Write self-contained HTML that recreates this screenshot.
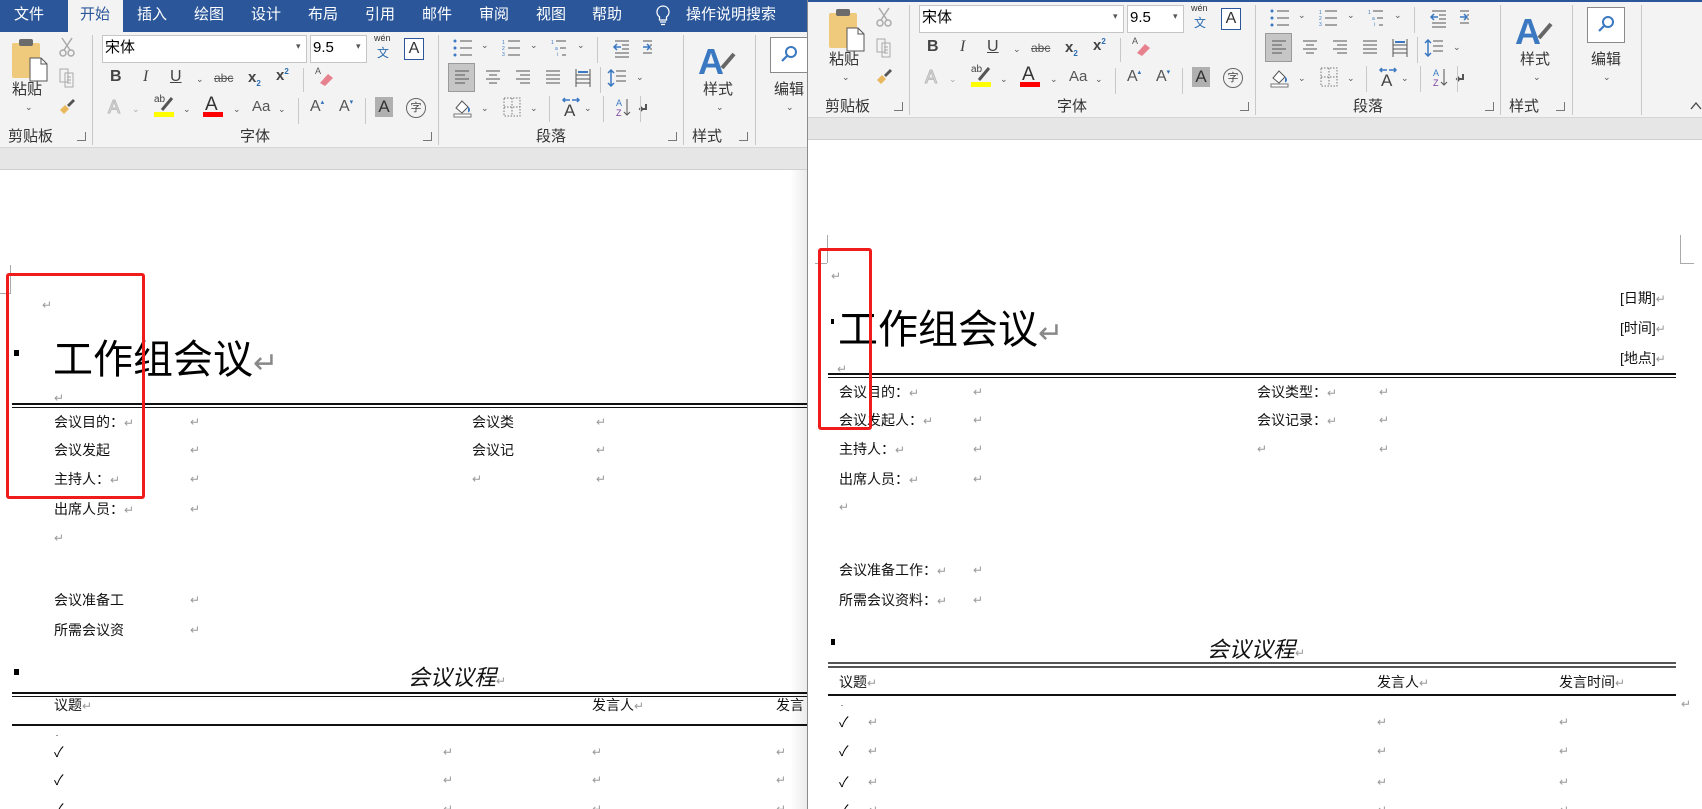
<!DOCTYPE html>
<html><head><meta charset="utf-8">
<style>
*{margin:0;padding:0;box-sizing:border-box}
body{width:1702px;height:809px;overflow:hidden;background:#fff;position:relative;font-family:"Liberation Sans","Noto Sans CJK SC",sans-serif;color:#222}
.a{position:absolute;white-space:nowrap}
.win{position:absolute;overflow:hidden}
.rb{position:absolute;width:900px;height:116px;background:#f3f3f3;border-bottom:1px solid #d6d6d6}
.t{font-size:15px;line-height:20px;color:#333}
.sep{position:absolute;width:1px;background:#c8c8c8}
.dd{font-size:9px;color:#555}
.lb{font-size:15px;color:#333;line-height:20px}
.dl{position:absolute;width:9px;height:9px;border:1px solid #777;border-top:none;border-left:none}
.band{position:absolute;height:22px;background:#e6e6e6;border-bottom:1px solid #d0d0d0}
.d{font-size:14px;line-height:20px;color:#111;font-family:"Liberation Sans","Noto Sans CJK SC",sans-serif}
.r{font-size:12px;color:#999;line-height:20px}
.ttl{font-size:40px;line-height:48px;color:#000;font-family:"Liberation Sans","Noto Sans CJK SC",sans-serif}
.ln{position:absolute;height:2px;background:#111}
.ck{font-size:14px;line-height:20px;color:#000}
</style></head><body>

<!-- LEFT WINDOW -->
<div class="win" style="left:0;top:0;width:807px;height:809px">
  <div class="a" style="left:0;top:0;width:807px;height:32px;background:#2b579a"></div>
  <div class="a" style="left:68px;top:0;width:55px;height:32px;background:#f3f3f3"></div>
  <div class="a t" style="left:14px;top:5px;color:#fff">文件</div>
  <div class="a t" style="left:80px;top:5px;color:#2b579a">开始</div>
  <div class="a t" style="left:137px;top:5px;color:#fff">插入</div>
  <div class="a t" style="left:194px;top:5px;color:#fff">绘图</div>
  <div class="a t" style="left:251px;top:5px;color:#fff">设计</div>
  <div class="a t" style="left:308px;top:5px;color:#fff">布局</div>
  <div class="a t" style="left:365px;top:5px;color:#fff">引用</div>
  <div class="a t" style="left:422px;top:5px;color:#fff">邮件</div>
  <div class="a t" style="left:479px;top:5px;color:#fff">审阅</div>
  <div class="a t" style="left:536px;top:5px;color:#fff">视图</div>
  <div class="a t" style="left:592px;top:5px;color:#fff">帮助</div>
  <svg class="a" style="left:655px;top:5px" width="16" height="22" viewBox="0 0 16 22"><path d="M8 1a6 6 0 0 0-3.5 10.9V15h7v-3.1A6 6 0 0 0 8 1z M5 17h6 M6 19.5h4" fill="none" stroke="#fff" stroke-width="1.3"/></svg>
  <div class="a t" style="left:686px;top:5px;color:#fff">操作说明搜索</div>
  <div class="rb" id="rbL" style="left:0;top:32px"></div>
  <div class="band" style="left:0;top:148px;width:807px"></div>
  <div class="a" style="left:0;top:170px;width:807px;height:639px;background:#fff"></div>
  <div class="a" style="left:790px;top:170px;width:17px;height:639px;background:linear-gradient(to right,rgba(0,0,0,0),rgba(0,0,0,0.08))"></div>

  <div class="a" style="left:10px;top:265px;width:1px;height:28px;background:#aaa"></div>
  <div class="a" style="left:0;top:293px;width:11px;height:1px;background:#aaa"></div>
  <div class="a r" style="left:42px;top:295px">↵</div>
  <div class="a" style="left:14px;top:350px;width:5px;height:6px;background:#000"></div>
  <div class="a ttl" style="left:53px;top:336px">工作组会议<span style="color:#888;font-size:30px">↵</span></div>
  <div class="a r" style="left:54px;top:388px">↵</div>
  <div class="ln" style="left:12px;top:403px;width:795px;height:1.5px"></div>
  <div class="ln" style="left:12px;top:407px;width:795px;height:1px"></div>

  <div class="a d" style="left:54px;top:412px">会议目的：<span class="r">↵</span></div><div class="a r" style="left:190px;top:412px">↵</div>
  <div class="a d" style="left:472px;top:412px">会议类</div><div class="a r" style="left:596px;top:412px">↵</div>
  <div class="a d" style="left:54px;top:440px">会议发起</div><div class="a r" style="left:190px;top:440px">↵</div>
  <div class="a d" style="left:472px;top:440px">会议记</div><div class="a r" style="left:596px;top:440px">↵</div>
  <div class="a d" style="left:54px;top:469px">主持人：<span class="r">↵</span></div><div class="a r" style="left:190px;top:469px">↵</div>
  <div class="a r" style="left:472px;top:469px">↵</div><div class="a r" style="left:596px;top:469px">↵</div>
  <div class="a d" style="left:54px;top:499px">出席人员：<span class="r">↵</span></div><div class="a r" style="left:190px;top:499px">↵</div>
  <div class="a r" style="left:54px;top:528px">↵</div>
  <div class="a d" style="left:54px;top:590px">会议准备工</div><div class="a r" style="left:190px;top:590px">↵</div>
  <div class="a d" style="left:54px;top:620px">所需会议资</div><div class="a r" style="left:190px;top:620px">↵</div>

  <div class="a" style="left:14px;top:669px;width:5px;height:6px;background:#000"></div>
  <div class="a" style="left:408px;top:664px;font-size:22px;line-height:28px;font-style:italic;color:#111">会议议程<span class="r" style="font-style:normal">↵</span></div>
  <div class="ln" style="left:12px;top:692px;width:795px;height:1.5px"></div>
  <div class="ln" style="left:12px;top:696px;width:795px;height:1px"></div>
  <div class="a d" style="left:54px;top:695px">议题<span class="r">↵</span></div>
  <div class="a d" style="left:592px;top:695px">发言人<span class="r">↵</span></div>
  <div class="a d" style="left:776px;top:695px">发言</div>
  <div class="ln" style="left:12px;top:724px;width:795px;height:1.5px"></div>
  <div class="a" style="left:56px;top:735px;width:2px;height:1px;background:#999"></div>
  <div class="a ck" style="left:54px;top:742px">✓</div><div class="a r" style="left:443px;top:742px">↵</div><div class="a r" style="left:592px;top:742px">↵</div><div class="a r" style="left:776px;top:742px">↵</div>
  <div class="a ck" style="left:54px;top:770px">✓</div><div class="a r" style="left:443px;top:770px">↵</div><div class="a r" style="left:592px;top:770px">↵</div><div class="a r" style="left:776px;top:770px">↵</div>
  <div class="a ck" style="left:54px;top:799px">✓</div><div class="a r" style="left:443px;top:799px">↵</div><div class="a r" style="left:592px;top:799px">↵</div><div class="a r" style="left:776px;top:799px">↵</div>

  <div class="a" style="left:6px;top:273px;width:139px;height:226px;border:3px solid #f01c1c;border-radius:3px"></div>
</div>

<!-- RIGHT WINDOW -->
<div class="win" style="left:807px;top:0;width:895px;height:809px;border-left:1px solid #8a8a8a">
  <div class="a" style="left:0;top:0;width:895px;height:2px;background:#2b579a"></div>
  <div class="rb" id="rbR" style="left:-807px;top:2px;width:1702px"></div>
  <div class="band" style="left:0;top:118px;width:895px"></div>
  <div class="a" style="left:0;top:140px;width:891px;height:669px;background:#fff"></div>
</div>
<div class="win" style="left:808px;top:0;width:894px;height:809px">
  <div style="position:absolute;left:-808px;top:0;width:1702px;height:809px">
  <div class="a" style="left:827px;top:235px;width:1px;height:28px;background:#aaa"></div>
  <div class="a" style="left:815px;top:263px;width:12px;height:1px;background:#aaa"></div>
  <div class="a" style="left:1680px;top:235px;width:1px;height:28px;background:#aaa"></div>
  <div class="a" style="left:1680px;top:263px;width:14px;height:1px;background:#aaa"></div>
  <div class="a r" style="left:831px;top:266px">↵</div>
  <div class="a" style="left:831px;top:319px;width:3px;height:5px;background:#000"></div>
  <div class="a ttl" style="left:838px;top:306px">工作组会议<span style="color:#888;font-size:30px">↵</span></div>
  <div class="a d" style="left:1620px;top:288px">[日期]<span class="r">↵</span></div>
  <div class="a d" style="left:1620px;top:318px">[时间]<span class="r">↵</span></div>
  <div class="a d" style="left:1620px;top:348px">[地点]<span class="r">↵</span></div>
  <div class="a r" style="left:837px;top:359px">↵</div>
  <div class="ln" style="left:828px;top:373px;width:848px;height:1.5px"></div>
  <div class="ln" style="left:828px;top:377px;width:848px;height:1px"></div>

  <div class="a d" style="left:839px;top:382px">会议目的：<span class="r">↵</span></div><div class="a r" style="left:973px;top:382px">↵</div>
  <div class="a d" style="left:1257px;top:382px">会议类型：<span class="r">↵</span></div><div class="a r" style="left:1379px;top:382px">↵</div>
  <div class="a d" style="left:839px;top:410px">会议发起人：<span class="r">↵</span></div><div class="a r" style="left:973px;top:410px">↵</div>
  <div class="a d" style="left:1257px;top:410px">会议记录：<span class="r">↵</span></div><div class="a r" style="left:1379px;top:410px">↵</div>
  <div class="a d" style="left:839px;top:439px">主持人：<span class="r">↵</span></div><div class="a r" style="left:973px;top:439px">↵</div>
  <div class="a r" style="left:1257px;top:439px">↵</div><div class="a r" style="left:1379px;top:439px">↵</div>
  <div class="a d" style="left:839px;top:469px">出席人员：<span class="r">↵</span></div><div class="a r" style="left:973px;top:469px">↵</div>
  <div class="a r" style="left:839px;top:497px">↵</div>
  <div class="a d" style="left:839px;top:560px">会议准备工作：<span class="r">↵</span></div><div class="a r" style="left:973px;top:560px">↵</div>
  <div class="a d" style="left:839px;top:590px">所需会议资料：<span class="r">↵</span></div><div class="a r" style="left:973px;top:590px">↵</div>

  <div class="a" style="left:831px;top:639px;width:4px;height:6px;background:#000"></div>
  <div class="a" style="left:1207px;top:636px;font-size:22px;line-height:28px;font-style:italic;color:#111">会议议程<span class="r" style="font-style:normal">↵</span></div>
  <div class="ln" style="left:828px;top:662px;width:848px;height:2px;background:#555"></div>
  <div class="ln" style="left:828px;top:666px;width:848px;height:1.5px;background:#555"></div>
  <div class="a d" style="left:839px;top:672px">议题<span class="r">↵</span></div>
  <div class="a d" style="left:1377px;top:672px">发言人<span class="r">↵</span></div>
  <div class="a d" style="left:1559px;top:672px">发言时间<span class="r">↵</span></div>
  <div class="ln" style="left:828px;top:694px;width:848px;height:1.5px"></div>
  <div class="a r" style="left:1681px;top:694px">↵</div>
  <div class="a" style="left:841px;top:705px;width:2px;height:1px;background:#999"></div>
  <div class="a ck" style="left:839px;top:712px">✓</div><div class="a r" style="left:868px;top:712px">↵</div><div class="a r" style="left:1377px;top:712px">↵</div><div class="a r" style="left:1559px;top:712px">↵</div>
  <div class="a ck" style="left:839px;top:741px">✓</div><div class="a r" style="left:868px;top:741px">↵</div><div class="a r" style="left:1377px;top:741px">↵</div><div class="a r" style="left:1559px;top:741px">↵</div>
  <div class="a ck" style="left:839px;top:772px">✓</div><div class="a r" style="left:868px;top:772px">↵</div><div class="a r" style="left:1377px;top:772px">↵</div><div class="a r" style="left:1559px;top:772px">↵</div>
  <div class="a ck" style="left:839px;top:800px">✓</div><div class="a r" style="left:868px;top:800px">↵</div><div class="a r" style="left:1377px;top:800px">↵</div><div class="a r" style="left:1559px;top:800px">↵</div>

  <div class="a" style="left:818px;top:248px;width:54px;height:182px;border:3px solid #f01c1c;border-radius:3px"></div>
  </div>
</div>

<template id="tpl">
  <svg class="a" style="left:10px;top:6px" width="42" height="44" viewBox="0 0 42 44"><rect x="2" y="5" width="28" height="35" rx="2" fill="#efc97c"/><rect x="9" y="1" width="14" height="7" rx="2" fill="#6b6b6b"/><path d="M20 20h11l6 6v17H20z" fill="#fff" stroke="#555"/><path d="M31 20v6h6" fill="none" stroke="#555"/></svg>
  <div class="a lb" style="left:12px;top:48px">粘贴</div>
  <div class="a dd" style="left:25px;top:70px">⌄</div>
  <svg class="a" style="left:58px;top:5px" width="18" height="20" viewBox="0 0 18 20"><path d="M4 1l8 12M14 1L6 13" stroke="#aaa" stroke-width="1.5"/><circle cx="5" cy="16" r="3" fill="none" stroke="#aaa" stroke-width="1.5"/><circle cx="13" cy="16" r="3" fill="none" stroke="#aaa" stroke-width="1.5"/></svg>
  <svg class="a" style="left:58px;top:36px" width="18" height="20" viewBox="0 0 18 20"><path d="M2 1h8v13H2z M7 5h8v14H7z" fill="#f3f3f3" stroke="#aaa"/><path d="M9 9h4M9 12h4M9 15h4" stroke="#aaa"/></svg>
  <svg class="a" style="left:58px;top:66px" width="18" height="18" viewBox="0 0 18 18"><path d="M2 12l5-5 4 4-5 5z" fill="#e9b75c"/><path d="M9 7l6-6 2 2-6 6z" fill="#555"/></svg>
  <div class="a lb" style="left:8px;top:95px">剪贴板</div>
  <div class="dl" style="left:77px;top:100px"></div>
  <div class="sep" style="left:92px;top:3px;height:110px"></div>
  <div class="a" style="left:102px;top:3px;width:205px;height:28px;background:#fff;border:1px solid #c6c6c6"></div>
  <div class="a" style="left:105px;top:6px;font-size:15px;line-height:20px;color:#000">宋体</div>
  <div class="a dd" style="left:296px;top:9px">▾</div>
  <div class="a" style="left:310px;top:3px;width:57px;height:28px;background:#fff;border:1px solid #c6c6c6"></div>
  <div class="a" style="left:313px;top:6px;font-size:15px;line-height:20px;color:#000">9.5</div>
  <div class="a dd" style="left:356px;top:9px">▾</div>
  <div class="a" style="left:374px;top:1px;font-size:9px;color:#333">wén</div>
  <div class="a" style="left:377px;top:12px;font-size:12px;color:#2b6cb0">文</div>
  <div class="a" style="left:404px;top:6px;width:20px;height:22px;border:1px solid #2b579a;background:#fff;font-size:16px;line-height:20px;text-align:center;color:#333">A</div>
  <div class="a" style="left:110px;top:36px;font-size:16px;font-weight:bold;color:#444">B</div>
  <div class="a" style="left:143px;top:36px;font-size:16px;font-style:italic;font-family:'Liberation Serif',serif;color:#444">I</div>
  <div class="a" style="left:170px;top:36px;font-size:16px;text-decoration:underline;color:#444">U</div>
  <div class="a dd" style="left:196px;top:42px">⌄</div>
  <div class="a" style="left:214px;top:39px;font-size:12px;text-decoration:line-through;color:#555">abc</div>
  <div class="a" style="left:248px;top:37px;font-size:15px;font-weight:bold;color:#444">x<sub style="font-size:8px;color:#2b6cb0">2</sub></div>
  <div class="a" style="left:276px;top:35px;font-size:15px;font-weight:bold;color:#444">x<sup style="font-size:8px;color:#2b6cb0">2</sup></div>
  <div class="sep" style="left:303px;top:36px;height:24px"></div>
  <svg class="a" style="left:314px;top:33px" width="20" height="22" viewBox="0 0 20 22"><text x="1" y="9" font-size="9" fill="#555">A</text><path d="M6 18l8-9 5 4-8 8z" fill="#e8818e"/></svg>
  <div class="a" style="left:108px;top:65px;font-size:18px;color:#ddd;-webkit-text-stroke:1px #bbb">A</div>
  <div class="a dd" style="left:132px;top:72px;color:#aaa">⌄</div>
  <div class="a" style="left:154px;top:62px;font-size:10px;color:#444">ab</div>
  <svg class="a" style="left:160px;top:64px" width="14" height="16"><path d="M2 14l10-12" stroke="#555" stroke-width="3"/></svg>
  <div class="a" style="left:154px;top:80px;width:20px;height:5px;background:#ffff00"></div>
  <div class="a dd" style="left:183px;top:72px">⌄</div>
  <div class="a" style="left:205px;top:62px;font-size:19px;color:#333">A</div>
  <div class="a" style="left:203px;top:80px;width:20px;height:5px;background:#ff0000"></div>
  <div class="a dd" style="left:233px;top:72px">⌄</div>
  <div class="a" style="left:252px;top:66px;font-size:15px;color:#555">Aa</div>
  <div class="a dd" style="left:278px;top:72px">⌄</div>
  <div class="sep" style="left:298px;top:66px;height:26px"></div>
  <div class="a" style="left:310px;top:66px;font-size:16px;color:#555">A<span style="font-size:7px;color:#2b6cb0;vertical-align:top">▴</span></div>
  <div class="a" style="left:339px;top:66px;font-size:16px;color:#555">A<span style="font-size:7px;color:#2b6cb0;vertical-align:top">▾</span></div>
  <div class="sep" style="left:365px;top:66px;height:26px"></div>
  <div class="a" style="left:375px;top:65px;width:18px;height:20px;background:#b0b0b0;font-size:17px;line-height:20px;text-align:center;color:#333">A</div>
  <div class="a" style="left:406px;top:66px;width:20px;height:20px;border:1px solid #666;border-radius:50%;font-size:11px;line-height:18px;text-align:center;color:#444">字</div>
  <div class="a lb" style="left:240px;top:95px">字体</div>
  <div class="dl" style="left:423px;top:100px"></div>
  <div class="sep" style="left:438px;top:3px;height:110px"></div>
  <svg class="a" style="left:452px;top:6px" width="200" height="20" viewBox="0 0 200 20"><g fill="#3a78c2"><circle cx="3" cy="3" r="1.5"/><circle cx="3" cy="10" r="1.5"/><circle cx="3" cy="17" r="1.5"/></g><path d="M8 3h12M8 10h12M8 17h12" stroke="#555"/><text x="50" y="6" font-size="5" fill="#3a78c2">1</text><text x="50" y="12" font-size="5" fill="#3a78c2">2</text><text x="50" y="18" font-size="5" fill="#3a78c2">3</text><path d="M56 3h12M56 10h12M56 17h12" stroke="#555"/><text x="99" y="6" font-size="5" fill="#3a78c2">1</text><text x="103" y="12" font-size="5" fill="#3a78c2">a</text><text x="105" y="18" font-size="5" fill="#3a78c2">i</text><path d="M104 3h10M108 10h6M110 17h4" stroke="#555"/><path d="M163 3h14M170 7h7M170 11h7M163 15h14M163 19h14" stroke="#555"/><path d="M169 9h-6m2-3l-3 3 3 3" stroke="#3a78c2" stroke-width="1.5" fill="none"/><path d="M191 3h14M198 7h7M198 11h7M191 15h14" stroke="#555"/><path d="M191 9h6m-2-3l3 3-3 3" stroke="#3a78c2" stroke-width="1.5" fill="none"/></svg>
  <div class="a dd" style="left:481px;top:8px">⌄</div>
  <div class="a dd" style="left:530px;top:8px">⌄</div>
  <div class="a dd" style="left:577px;top:8px">⌄</div>
  <div class="sep" style="left:597px;top:5px;height:26px"></div>
  <div class="a" style="left:448px;top:31px;width:27px;height:29px;background:#c6c6c6;border:1px solid #9a9a9a"></div>
  <svg class="a" style="left:453px;top:37px" width="190" height="18" viewBox="0 0 190 18"><path d="M2 2h14M2 6h10M2 10h14M2 14h10" stroke="#555"/><path d="M33 2h14M36 6h8M33 10h14M36 14h8" stroke="#555"/><path d="M63 2h14M67 6h10M63 10h14M67 14h10" stroke="#555"/><path d="M93 2h14M93 6h14M93 10h14M93 14h14" stroke="#555"/><path d="M123 0v18M137 0v18M123 6h14M123 10h14M123 14h14" stroke="#555"/><path d="M125 3h10" stroke="#3a78c2" stroke-width="2"/><path d="M163 2h10M163 7h10M163 12h10" stroke="#555"/><path d="M158 1v16M155 4l3-3 3 3M155 14l3 3 3-3" stroke="#3a78c2" fill="none" stroke-width="1.5"/></svg>
  <div class="sep" style="left:600px;top:35px;height:26px"></div>
  <div class="a dd" style="left:636px;top:40px">⌄</div>
  <svg class="a" style="left:452px;top:64px" width="200" height="22" viewBox="0 0 200 22"><path d="M4 12l6-7 6 6-6 6z" fill="#fff" stroke="#555"/><path d="M16 11c2 2 2 4 0 5" fill="#3a78c2" stroke="#3a78c2"/><rect x="2" y="18" width="17" height="3" fill="#fff" stroke="#777"/><path d="M52 2h16v18H52zM60 2v18M52 11h16" stroke="#777" stroke-dasharray="1.5 1.5" fill="none"/><text x="112" y="20" font-size="17" fill="#444">A</text><path d="M111 4h7M113 2l-2 2 2 2M127 4h-7M125 2l2 2-2 2" stroke="#3a78c2" fill="none" stroke-width="1.5"/><text x="164" y="10" font-size="9" fill="#3a78c2">A</text><text x="164" y="20" font-size="9" fill="#7a3fa0">Z</text><path d="M175 3v16M172 16l3 3 3-3" stroke="#555" fill="none"/><path d="M194 8v5h-6M190 11l-2 2 2 2" stroke="#555" stroke-width="2" fill="none"/></svg>
  <div class="a dd" style="left:481px;top:71px">⌄</div>
  <div class="a dd" style="left:530px;top:71px">⌄</div>
  <div class="sep" style="left:549px;top:64px;height:26px"></div>
  <div class="a dd" style="left:584px;top:71px">⌄</div>
  <div class="sep" style="left:603px;top:64px;height:26px"></div>
  <div class="sep" style="left:640px;top:64px;height:26px"></div>
  <div class="a lb" style="left:536px;top:95px">段落</div>
  <div class="dl" style="left:668px;top:100px"></div>
  <div class="sep" style="left:683px;top:3px;height:110px"></div>
  <svg class="a" style="left:698px;top:8px" width="40" height="40" viewBox="0 0 40 40"><text x="0" y="34" font-size="36" font-weight="bold" fill="#3a78c2" font-family="Liberation Sans">A</text><path d="M24 28l12-14" stroke="#666" stroke-width="4"/></svg>
  <div class="a lb" style="left:703px;top:48px">样式</div>
  <div class="a dd" style="left:716px;top:70px">⌄</div>
  <div class="a lb" style="left:692px;top:95px">样式</div>
  <div class="dl" style="left:739px;top:100px"></div>
  <div class="sep" style="left:755px;top:3px;height:110px"></div>
  <div class="a" style="left:770px;top:5px;width:38px;height:36px;background:#fff;border:1px solid #8a8a8a"></div>
  <svg class="a" style="left:779px;top:12px" width="20" height="20" viewBox="0 0 20 20"><circle cx="12" cy="8" r="5" fill="none" stroke="#3a78c2" stroke-width="2"/><path d="M8.5 11.5L3 17" stroke="#3a78c2" stroke-width="2.2"/></svg>
  <div class="a lb" style="left:774px;top:48px">编辑</div>
  <div class="a dd" style="left:786px;top:70px">⌄</div>
  <div class="sep" style="left:824px;top:3px;height:110px"></div>
  <svg class="a" style="left:873px;top:98px" width="12" height="10"><path d="M1 9l5-6 5 6" stroke="#444" fill="none" stroke-width="1.3"/></svg>
</template>
<script>
var t=document.getElementById('tpl').innerHTML;
var L=document.getElementById('rbL');L.innerHTML=t;
var R=document.getElementById('rbR');R.innerHTML='<div style="position:absolute;left:816px;top:0;width:900px;height:116px">'+t+'</div>';
</script>
</body></html>
